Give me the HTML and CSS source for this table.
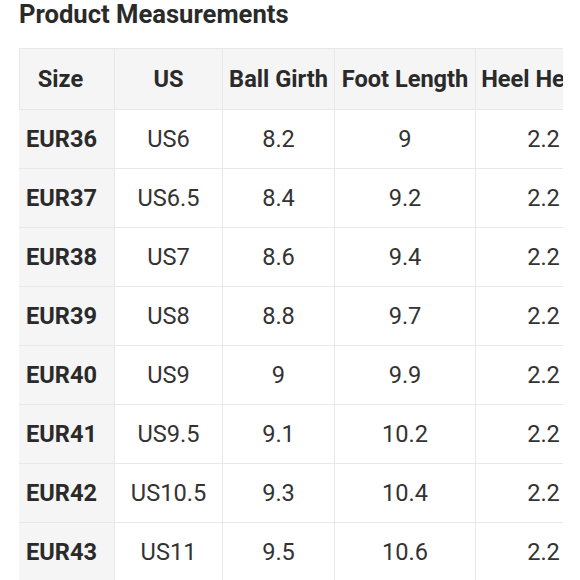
FILE: index.html
```
<!DOCTYPE html>
<html>
<head>
<meta charset="utf-8">
<link rel="stylesheet" href="styles.css">
</head>
<body>
<h2 class="title">Product Measurements</h2>
<div class="scroller">
<table class="sizes">
<colgroup>
<col class="c-size"><col class="c-us"><col class="c-ball"><col class="c-foot"><col class="c-heel">
</colgroup>
<thead>
<tr><th class="first">Size</th><th>US</th><th>Ball Girth</th><th>Foot Length</th><th>Heel Height</th></tr>
</thead>
<tbody>
<tr><th class="first">EUR36</th><td>US6</td><td>8.2</td><td>9</td><td>2.2</td></tr>
<tr><th class="first">EUR37</th><td>US6.5</td><td>8.4</td><td>9.2</td><td>2.2</td></tr>
<tr><th class="first">EUR38</th><td>US7</td><td>8.6</td><td>9.4</td><td>2.2</td></tr>
<tr><th class="first">EUR39</th><td>US8</td><td>8.8</td><td>9.7</td><td>2.2</td></tr>
<tr><th class="first">EUR40</th><td>US9</td><td>9</td><td>9.9</td><td>2.2</td></tr>
<tr><th class="first">EUR41</th><td>US9.5</td><td>9.1</td><td>10.2</td><td>2.2</td></tr>
<tr><th class="first">EUR42</th><td>US10.5</td><td>9.3</td><td>10.4</td><td>2.2</td></tr>
<tr><th class="first">EUR43</th><td>US11</td><td>9.5</td><td>10.6</td><td>2.2</td></tr>
</tbody>
</table>
</div>
</body>
</html>
```
FILE: styles.css
```
html, body {
  margin: 0;
  padding: 0;
  background: #ffffff;
}
body {
  font-family: Roboto, "Liberation Sans", sans-serif;
  color: #333333;
  padding-left: 19px;
}
.title {
  margin: 0;
  font-size: 25.6px;
  line-height: 28px;
  font-weight: 700;
  color: #2a2a2a;
  height: 48px;
}
.scroller {
  width: 544px;
  overflow: hidden;
}
.sizes {
  border-collapse: collapse;
  table-layout: fixed;
  width: 592px;
  font-size: 23.6px;
}
.c-size { width: 95px; }
.c-us { width: 108px; }
.c-ball { width: 112px; }
.c-foot { width: 141px; }
.c-heel { width: 136px; }
.sizes th, .sizes td {
  border: 1px solid #e8e8e8;
  text-align: center;
  padding: 0 4px;
  white-space: nowrap;
  overflow: hidden;
}
.sizes thead th {
  background: #f5f5f5;
  font-weight: 700;
  height: 60px;
  color: #2a2a2a;
}
.sizes tbody tr {
  height: 59px;
}
.sizes td {
  font-weight: 400;
  color: #333333;
}
.sizes th.first {
  background: #f5f5f5;
  padding: 0 19px 0 6px;
  font-weight: 700;
  color: #2a2a2a;
}
.sizes tbody th.first {
  border-left-color: #f5f5f5;
}
```
